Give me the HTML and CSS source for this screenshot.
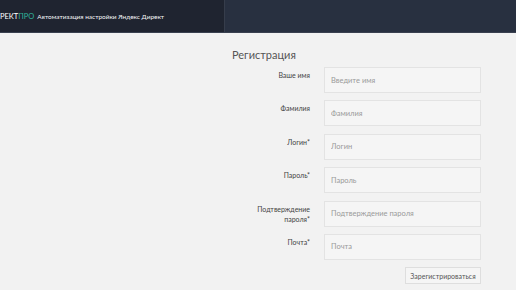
FILE: index.html
```html
<!DOCTYPE html>
<html lang="ru">
<head>
<meta charset="utf-8">
<title>Регистрация</title>
<link rel="stylesheet" href="styles.css">
</head>
<body>
<header class="topbar">
  <div class="brand">
    <span class="logo">РЕКТ<span class="logo-accent">ПРО</span></span>
    <span class="tagline">Автоматизация настройки Яндекс Директ</span>
  </div>
  <div class="topbar-right"></div>
</header>
<main class="page">
  <form class="reg">
    <h1 class="reg-title">Регистрация</h1>
    <div class="row">
      <label class="row-label">Ваше имя</label>
      <input class="field" type="text" placeholder="Введите имя">
    </div>
    <div class="row">
      <label class="row-label">Фамилия</label>
      <input class="field" type="text" placeholder="Фамилия">
    </div>
    <div class="row">
      <label class="row-label">Логин*</label>
      <input class="field" type="text" placeholder="Логин">
    </div>
    <div class="row">
      <label class="row-label">Пароль*</label>
      <input class="field" type="password" placeholder="Пароль">
    </div>
    <div class="row">
      <label class="row-label">Подтверждение пароля*</label>
      <input class="field" type="password" placeholder="Подтверждение пароля">
    </div>
    <div class="row">
      <label class="row-label">Почта*</label>
      <input class="field" type="email" placeholder="Почта">
    </div>
    <div class="actions">
      <button class="submit" type="button">Зарегистрироваться</button>
    </div>
  </form>
</main>
</body>
</html>
```

FILE: styles.css
```css
* { box-sizing: border-box; }
html, body {
  margin: 0;
  padding: 0;
  background: #f2f2f2;
  font-family: Lato, "Open Sans", "Liberation Sans", sans-serif;
  overflow: hidden;
}
.topbar {
  display: flex;
  height: 33px;
  background: #1f2430;
  border-bottom: 1px solid #3a4150;
}
.brand {
  width: 225px;
  display: flex;
  align-items: center;
  gap: 3px;
  border-right: 1px solid #363d4b;
  white-space: nowrap;
  overflow: hidden;
}
.logo {
  font-size: 7.5px;
  color: #ffffff;
}
.logo-accent { color: #2fb39b; }
.tagline {
  font-size: 6.5px;
  font-weight: 400;
  color: #f4f5f7;
}
.topbar-right {
  flex: 1;
  background: #283040;
}
.page {
  display: flex;
  padding-left: 232px;
  padding-top: 15px;
}
.reg {
  width: 249px;
  display: flex;
  flex-direction: column;
}
.reg-title {
  margin: 0 0 5px 0;
  font-size: 11px;
  font-weight: 400;
  color: #555;
  line-height: 14px;
}
.row {
  display: grid;
  grid-template-columns: 78px 157px;
  column-gap: 14px;
  margin-bottom: 7.4px;
}
.row-label {
  text-align: right;
  font-size: 7px;
  line-height: 10px;
  color: #444;
  padding-top: 3px;
}
.field {
  height: 26px;
  border: 1px solid #e3e3e3;
  background: #f5f5f5;
  padding: 0 6px;
  font-family: inherit;
  font-size: 7.5px;
  color: #444;
  outline: none;
}
.field::placeholder { color: #9a9a9a; }
.actions {
  display: flex;
  justify-content: flex-end;
}
.submit {
  height: 17px;
  width: 76px;
  padding: 0;
  border: 1px solid #dedede;
  background: #f5f5f5;
  font-family: inherit;
  font-size: 7px;
  color: #555;
}
```
